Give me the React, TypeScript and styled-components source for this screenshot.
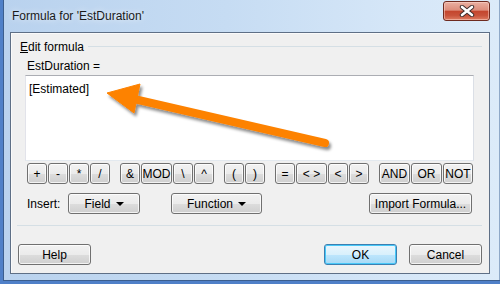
import React from 'react';
import styled, { createGlobalStyle } from 'styled-components';

const Global = createGlobalStyle`
  html, body { margin: 0; padding: 0; background: #4f80c8; }
  body {
    width: 500px; height: 284px; overflow: hidden;
    font-family: "Liberation Sans", Arial, sans-serif;
    font-size: 12px; color: #000;
  }
`;

const Page = styled.div`
  position: relative;
  width: 500px;
  height: 284px;
`;

const Frame = styled.div`
  width: 500px;
  height: 284px;
  box-sizing: border-box;
  display: flex;
  flex-direction: column;
  border-left: 3px solid #4f80c8;
  border-bottom: 3px solid #4f80c8;
  padding: 0 10px 7px 7px;
  background: linear-gradient(to right, #b9d2ee 0%, #c6dcf3 45%, #d6e7f8 80%, #dcebf9 100%);
  box-shadow: inset 1px 0 0 #3b5e8e, inset 0 -1px 0 #3b5e8e, inset -1px 0 0 #8fa9c8;
`;

const TitleBar = styled.div`
  height: 32px;
  flex: none;
  display: flex;
  align-items: flex-start;
  justify-content: space-between;
`;

const Title = styled.div`
  margin: 9px 0 0 2px;
  line-height: 14px;
  font-size: 12px;
  color: #1a1a1a;
  text-shadow: 0 0 6px rgba(255, 255, 255, 0.9);
`;

const CloseButton = styled.div`
  margin-top: 1px;
  width: 47px;
  height: 20px;
  box-sizing: border-box;
  border: 1px solid #6e2b20;
  border-radius: 3px;
  display: flex;
  align-items: center;
  justify-content: center;
  background: linear-gradient(#eab0a2 0%, #dd8d7b 45%, #c4462e 52%, #c9533b 75%, #dd7d63 100%);
  box-shadow: inset 0 0 0 1px rgba(255, 220, 210, 0.5);
`;

const Client = styled.div`
  flex: 1;
  display: flex;
  flex-direction: column;
  border: 1px solid #5e6f86;
  background: #f0f0f0;
  box-shadow: inset 1px 1px 0 #fafafa;
  padding: 0 7px 0 6px;
`;

const GroupHeader = styled.div`
  margin-top: 7px;
  display: flex;
  align-items: center;
  gap: 4px;
  line-height: 14px;
`;

const GroupLabel = styled.span`
  margin-left: 3px;
`;

const Mnemonic = styled.span`
  text-decoration: underline;
`;

const Rule = styled.div`
  flex: 1;
  height: 1px;
  background: #d5dfe5;
  margin-top: -1px;
`;

const GroupBody = styled.div`
  display: flex;
  flex-direction: column;
  padding: 0 8px;
`;

const FieldLabel = styled.div`
  margin: 5px 0 0 2px;
  line-height: 14px;
`;

const FormulaBox = styled.div`
  margin-top: 2px;
  height: 86px;
  box-sizing: border-box;
  background: #fff;
  border: 1px solid;
  border-color: #abadb3 #dbdfe6 #e3e9ef #e2e3ea;
  padding: 6px 3px;
  line-height: 14px;
`;

const OpRow = styled.div`
  margin: 2px 0 0 2px;
  display: flex;
  gap: 10px;
`;

const OpGroup = styled.div`
  display: flex;
  gap: 1px;
`;

const Button = styled.div<{ $w: number; $default?: boolean }>`
  width: ${p => p.$w}px;
  height: 21px;
  box-sizing: border-box;
  display: flex;
  align-items: center;
  justify-content: center;
  gap: 5px;
  font-size: 12px;
  border: 1px solid ${p => (p.$default ? '#3c7fb1' : '#707070')};
  border-radius: 3px;
  background: ${p =>
    p.$default
      ? 'linear-gradient(#eaf6fd 0%, #d9f0fc 50%, #bee6fd 50%, #a7d9f5 100%)'
      : 'linear-gradient(#f2f2f2 0%, #ebebeb 50%, #dddddd 50%, #cfcfcf 100%)'};
  box-shadow: inset 0 0 0 1px ${p => (p.$default ? '#48c8f8' : 'rgba(255,255,255,0.75)')};
  color: #000;
`;

const Caret = styled.span`
  width: 0;
  height: 0;
  border-left: 4px solid transparent;
  border-right: 4px solid transparent;
  border-top: 4px solid #000;
  margin-top: 1px;
`;

const InsertRow = styled.div`
  margin: 9px 0 0 2px;
  display: flex;
  align-items: center;
`;

const InsertLabel = styled.span`
  width: 41px;
`;

const Spacer = styled.div<{ $w: number }>`
  width: ${p => p.$w}px;
`;

const RightButton = styled.div`
  margin-left: auto;
  margin-right: 2px;
`;

const Separator = styled.div`
  margin-top: 11px;
  height: 1px;
  background: #d5dfe5;
`;

const FooterRow = styled.div`
  margin-top: 18px;
  padding-left: 1px;
  display: flex;
  gap: 12px;
`;

const FooterSpacer = styled.div`
  flex: 1;
`;

const ArrowOverlay = styled.svg`
  position: absolute;
  left: 0;
  top: 0;
  pointer-events: none;
`;

const ops: { label: string; w: number }[][] = [
  [{ label: '+', w: 20 }, { label: '-', w: 20 }, { label: '*', w: 20 }, { label: '/', w: 20 }],
  [{ label: '&', w: 20 }, { label: 'MOD', w: 31 }, { label: '\\', w: 20 }, { label: '^', w: 20 }],
  [{ label: '(', w: 20 }, { label: ')', w: 20 }],
  [{ label: '=', w: 20 }, { label: '< >', w: 31 }, { label: '<', w: 20 }, { label: '>', w: 20 }],
  [{ label: 'AND', w: 31 }, { label: 'OR', w: 31 }, { label: 'NOT', w: 30 }],
];

export default function App() {
  return (
    <Page>
      <Global />
      <Frame>
        <TitleBar>
          <Title>Formula for 'EstDuration'</Title>
          <CloseButton>
            <svg width="16" height="12" viewBox="0 0 16 12">
              <path d="M3 2 L13 10 M13 2 L3 10" stroke="#3a2a2a" strokeWidth="4.4" strokeLinecap="round" />
              <path d="M3 2 L13 10 M13 2 L3 10" stroke="#fff" strokeWidth="2.6" strokeLinecap="round" />
            </svg>
          </CloseButton>
        </TitleBar>
        <Client>
          <GroupHeader>
            <GroupLabel>
              <Mnemonic>E</Mnemonic>dit formula
            </GroupLabel>
            <Rule />
          </GroupHeader>
          <GroupBody>
            <FieldLabel>EstDuration =</FieldLabel>
            <FormulaBox>[Estimated]</FormulaBox>
            <OpRow>
              {ops.map((g, i) => (
                <OpGroup key={i}>
                  {g.map(o => (
                    <Button key={o.label} $w={o.w}>
                      {o.label}
                    </Button>
                  ))}
                </OpGroup>
              ))}
            </OpRow>
            <InsertRow>
              <InsertLabel>Insert:</InsertLabel>
              <Button $w={72}>
                Field <Caret />
              </Button>
              <Spacer $w={31} />
              <Button $w={91}>
                Function <Caret />
              </Button>
              <RightButton>
                <Button $w={103}>Import Formula...</Button>
              </RightButton>
            </InsertRow>
          </GroupBody>
          <Separator />
          <FooterRow>
            <Button $w={73}>Help</Button>
            <FooterSpacer />
            <Button $w={73} $default>OK</Button>
            <Button $w={73}>Cancel</Button>
          </FooterRow>
        </Client>
      </Frame>
      <ArrowOverlay width="500" height="284" viewBox="0 0 500 284">
        <defs>
          <filter id="sh" x="-20%" y="-50%" width="140%" height="200%">
            <feDropShadow dx="2" dy="3" stdDeviation="1.6" floodColor="#000" floodOpacity="0.45" />
          </filter>
        </defs>
        <g filter="url(#sh)" fill="#fd8204" stroke="#fd8204">
          <line x1="134" y1="99" x2="325" y2="143" strokeWidth="8" strokeLinecap="round" />
          <polygon points="107,93 140,84 134,113" strokeWidth="1" strokeLinejoin="round" />
        </g>
      </ArrowOverlay>
    </Page>
  );
}
